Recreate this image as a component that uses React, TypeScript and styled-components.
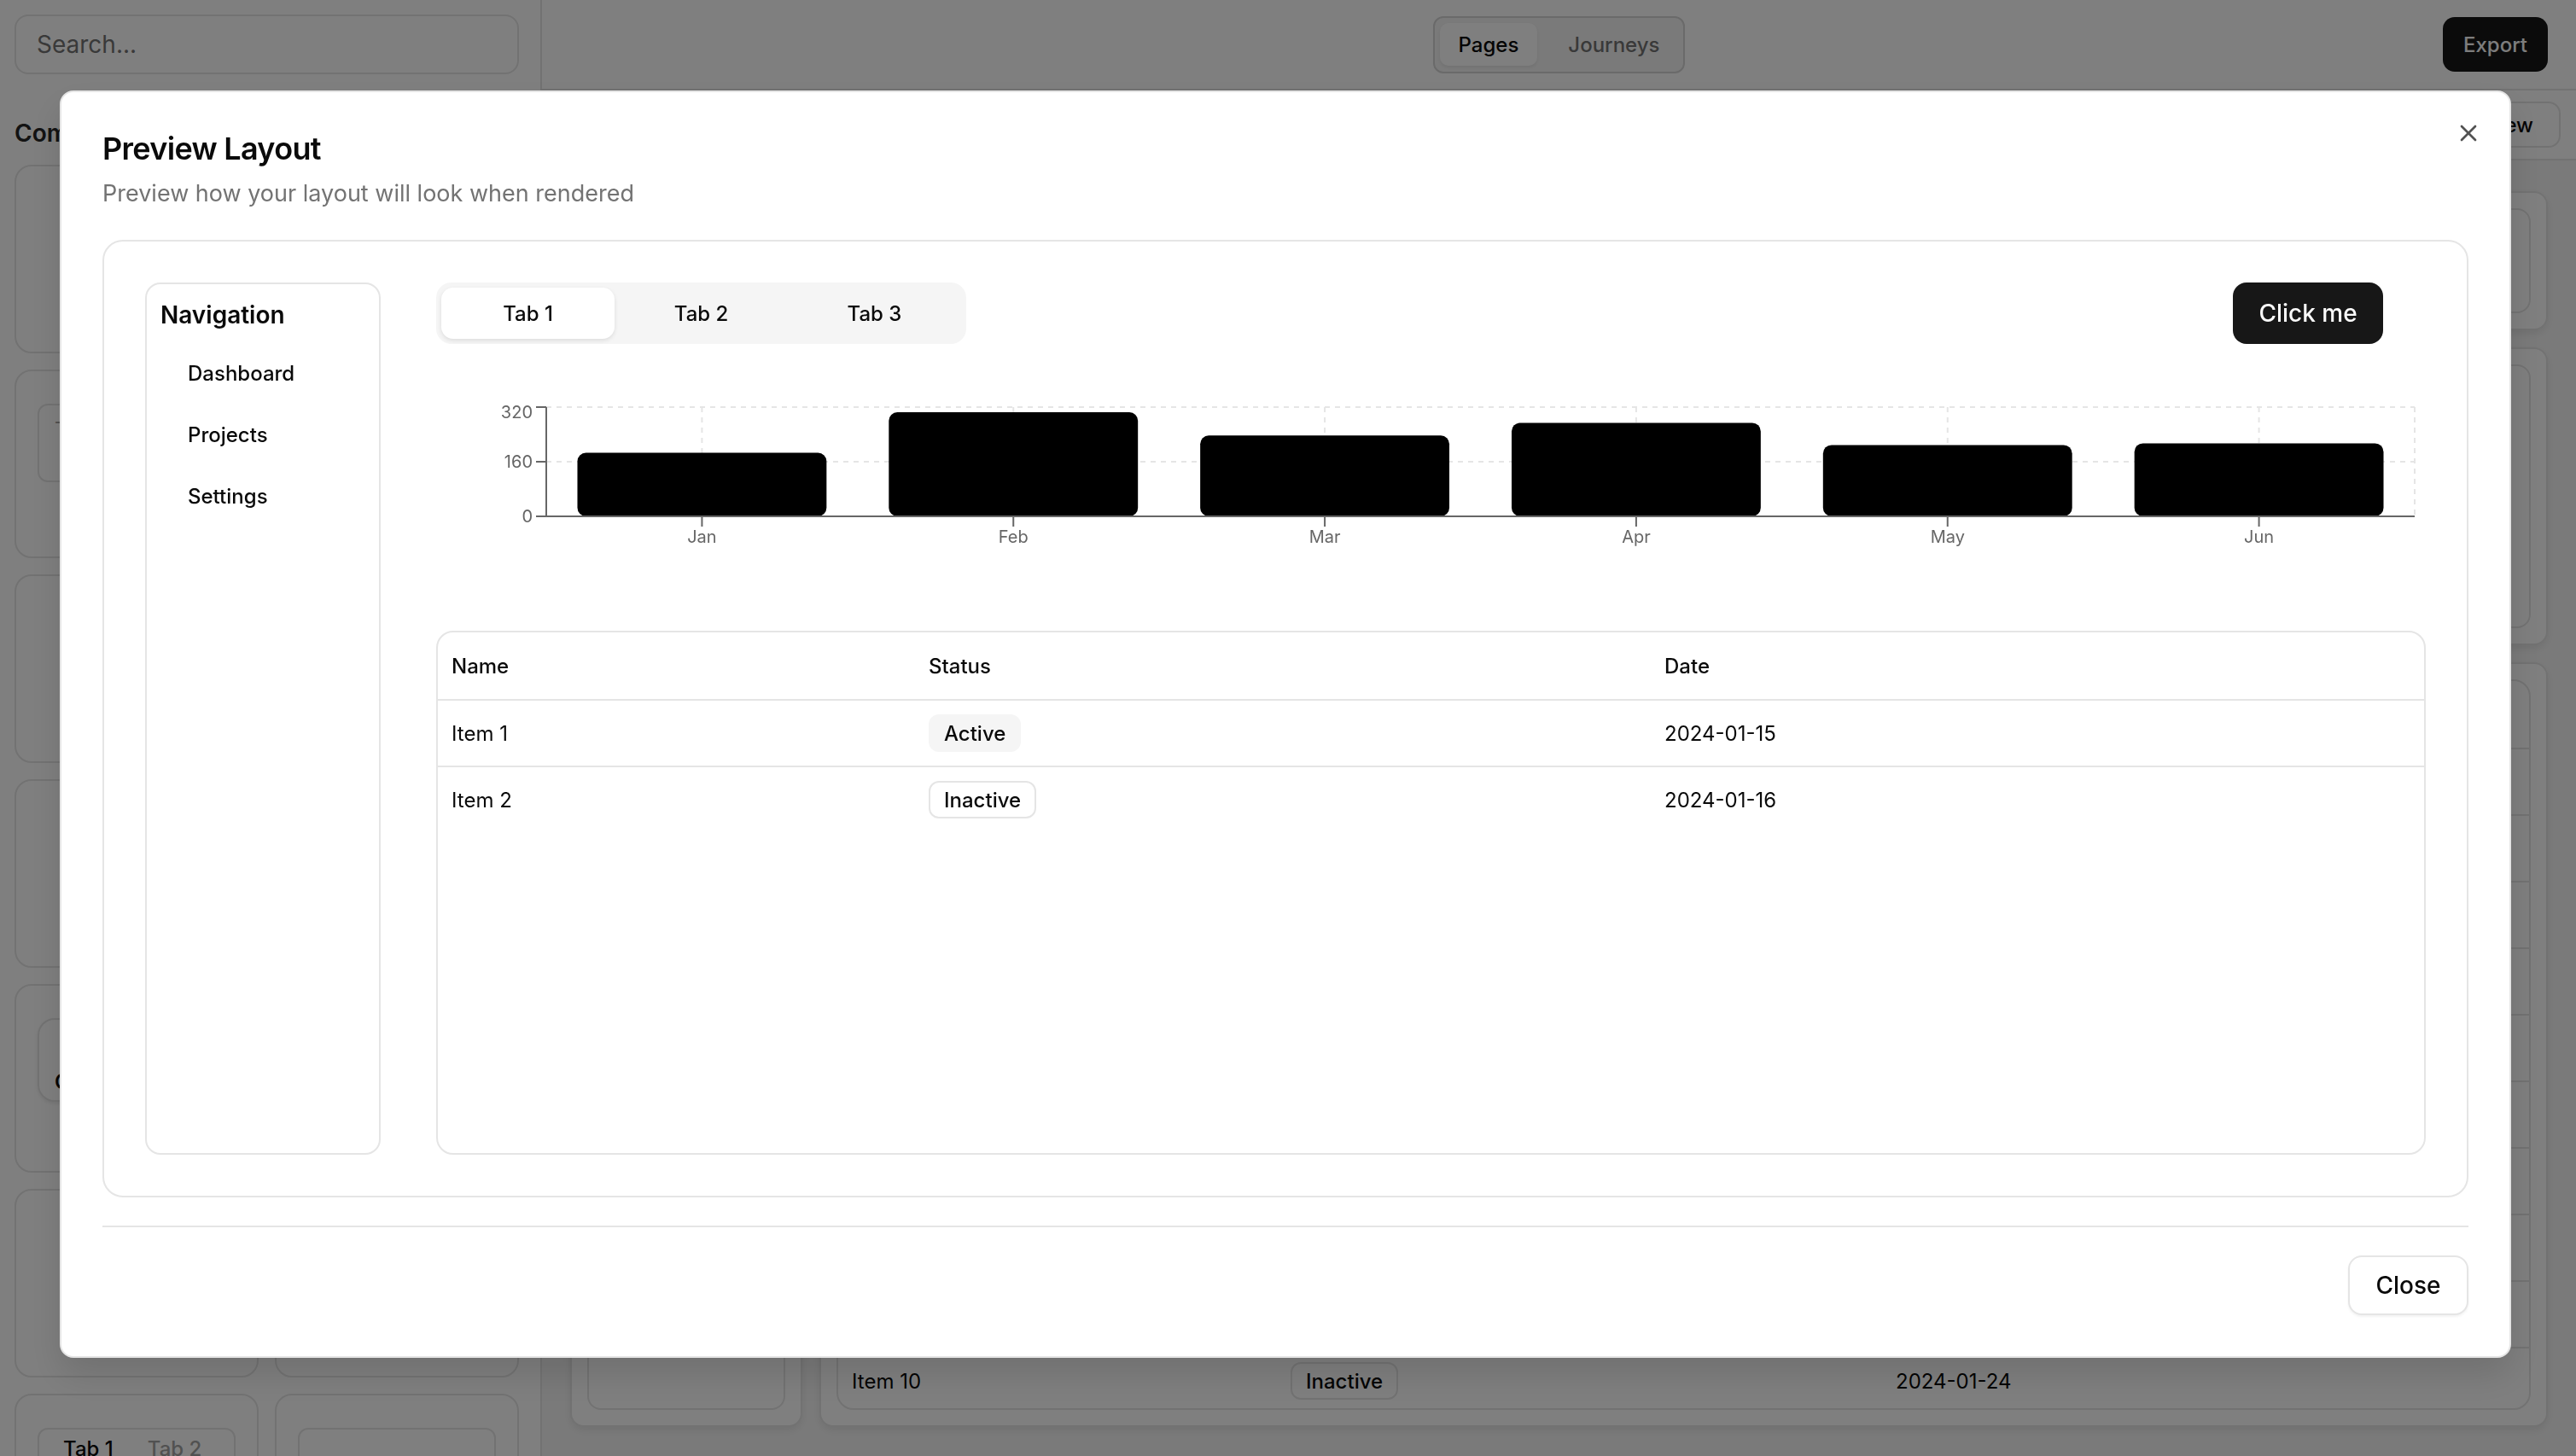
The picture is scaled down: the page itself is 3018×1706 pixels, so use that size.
import React from 'react'
import styled, { createGlobalStyle } from 'styled-components'
import { X } from 'lucide-react'

const GlobalStyle = createGlobalStyle`
  * { box-sizing: border-box; }
  html, body { margin: 0; padding: 0; }
  body {
    font-family: Inter, "Noto Sans", "Liberation Sans", sans-serif;
    color: #0a0a0a;
    background: #ffffff;
    overflow: hidden;
  }
`

type Row = { name: string; active: boolean; date: string }

const modalRows: Row[] = [
  { name: 'Item 1', active: true, date: '2024-01-15' },
  { name: 'Item 2', active: false, date: '2024-01-16' },
]

const bgRows: Row[] = Array.from({ length: 10 }, (_, i) => ({
  name: `Item ${i + 1}`,
  active: i % 2 === 0,
  date: `2024-01-${String(15 + i).padStart(2, '0')}`,
}))

const chartData = [
  { month: 'Jan', value: 186 },
  { month: 'Feb', value: 305 },
  { month: 'Mar', value: 237 },
  { month: 'Apr', value: 274 },
  { month: 'May', value: 209 },
  { month: 'Jun', value: 214 },
]

// ---------- page behind the dialog ----------

const Page = styled.div`
  width: 3018px;
  height: 1706px;
  display: flex;
  overflow: hidden;
  background: #ffffff;
`

const Sidebar = styled.aside`
  width: 635px;
  height: 1706px;
  flex-shrink: 0;
  border-right: 2px solid #e5e5e5;
  padding: 17px 25px 0 17px;
  overflow: hidden;
`

const SearchBox = styled.div`
  height: 70px;
  border: 2px solid #e5e5e5;
  border-radius: 16px;
  padding: 0 24px;
  display: flex;
  align-items: center;
  font-size: 28px;
  color: #737373;
`

const SectionTitle = styled.h3`
  margin: 49px 0 0;
  font-size: 28px;
  line-height: 40px;
  font-weight: 600;
  color: #262626;
`

const CardGrid = styled.div`
  margin-top: 17px;
  display: grid;
  grid-template-columns: 1fr 1fr;
  gap: 19px 19px;
`

const SideCard = styled.div`
  height: 221px;
  border: 2px solid #e5e5e5;
  border-radius: 20px;
  padding: 38px 25px;
`

const MiniInput = styled.div<{ $h: number; $top?: number }>`
  height: ${p => p.$h}px;
  border: 2px solid #e5e5e5;
  border-radius: 12px;
  padding: ${p => p.$top ?? 14}px 18px 0;
  font-size: 24px;
  color: #a3a3a3;
`

const MiniCard = styled.div`
  height: 98px;
  border: 2px solid #e5e5e5;
  border-radius: 20px;
  box-shadow: 0 2px 4px rgba(0, 0, 0, 0.08);
  padding: 58px 18px 0;
  font-size: 24px;
  font-weight: 600;
`

const MiniTabs = styled.div`
  display: flex;
  gap: 40px;
  padding: 8px 28px;
  border: 2px solid #e5e5e5;
  border-radius: 12px;
  font-size: 24px;
  font-weight: 500;
  span:last-child { color: #a3a3a3; }
`

const Main = styled.main`
  flex: 1;
  display: flex;
  flex-direction: column;
  min-width: 0;
`

const TopBar = styled.header`
  height: 106px;
  flex-shrink: 0;
  border-bottom: 2px solid #e5e5e5;
  display: grid;
  grid-template-columns: 1fr auto 1fr;
  align-items: center;
  padding: 0 33px;
`

const Toggle = styled.div`
  grid-column: 2;
  display: flex;
  align-items: center;
  height: 67px;
  padding: 0 6px;
  gap: 14px;
  border: 2px solid #d4d4d4;
  border-radius: 12px;
  background: #f5f5f5;
`

const ToggleItem = styled.div<{ $on?: boolean }>`
  height: 50px;
  padding: 0 22px;
  display: flex;
  align-items: center;
  border-radius: 10px;
  font-size: 24px;
  font-weight: 500;
  color: ${p => (p.$on ? '#0a0a0a' : '#737373')};
  background: ${p => (p.$on ? '#ffffff' : 'transparent')};
  box-shadow: ${p => (p.$on ? '0 2px 4px rgba(0,0,0,0.08)' : 'none')};
`

const ExportButton = styled.div`
  justify-self: end;
  height: 64px;
  padding: 0 24px;
  display: flex;
  align-items: center;
  border-radius: 14px;
  background: #171717;
  color: #fafafa;
  font-size: 24px;
  font-weight: 500;
`

const SubBar = styled.div`
  height: 82px;
  flex-shrink: 0;
  border-bottom: 2px solid #e5e5e5;
  display: flex;
  justify-content: flex-end;
  align-items: center;
  padding: 0 18px;
`

const GhostButton = styled.div`
  height: 54px;
  padding: 0 30px;
  display: flex;
  align-items: center;
  border: 2px solid #e5e5e5;
  border-radius: 14px;
  font-size: 24px;
  font-weight: 500;
`

const Canvas = styled.div`
  flex: 1;
  background: #f5f5f5;
  padding: 36px 33px 34px;
  display: grid;
  grid-template-columns: 272px 1fr;
  gap: 20px;
  min-height: 0;
`

const Frame = styled.div<{ $h?: number }>`
  ${p => (p.$h ? `height: ${p.$h}px; flex-shrink: 0;` : 'flex: 1;')}
  background: #ffffff;
  border: 2px solid #e5e5e5;
  border-radius: 16px;
  padding: 18px;
  box-shadow: 0 4px 10px rgba(0, 0, 0, 0.08);
  display: flex;
  flex-direction: column;
  min-height: 0;
  overflow: hidden;
`

const FrameColumn = styled.div`
  display: flex;
  flex-direction: column;
  gap: 20px;
  min-height: 0;
`

const InnerBox = styled.div`
  flex: 1;
  border: 2px solid #e5e5e5;
  border-radius: 16px;
`

// ---------- dialog ----------

const Overlay = styled.div`
  position: fixed;
  inset: 0;
  background: rgba(0, 0, 0, 0.5);
`

const Dialog = styled.div`
  position: fixed;
  left: 70px;
  top: 106px;
  width: 2872px;
  background: #ffffff;
  border: 2px solid #e5e5e5;
  border-radius: 16px;
  padding: 48px;
  display: flex;
  flex-direction: column;
  gap: 33px;
  box-shadow: 0 20px 40px rgba(0, 0, 0, 0.12);
`

const CloseIcon = styled.div`
  position: absolute;
  top: 32px;
  right: 32px;
  width: 32px;
  height: 32px;
  color: #0a0a0a;
  opacity: 0.7;
  display: flex;
`

const Header = styled.div`
  display: flex;
  flex-direction: column;
  gap: 15px;
  margin-bottom: 1px;
`

const Title = styled.h2`
  margin: 0;
  font-size: 36px;
  line-height: 36px;
  font-weight: 600;
  letter-spacing: -0.7px;
`

const Description = styled.p`
  margin: 0;
  font-size: 27px;
  line-height: 40px;
  color: #737373;
`

const PreviewCard = styled.div`
  height: 1122px;
  border: 2px solid #e5e5e5;
  border-radius: 24px;
  padding: 48px;
  display: grid;
  grid-template-columns: 276px 1fr;
  gap: 65px;
`

const NavPanel = styled.nav`
  border: 2px solid #e5e5e5;
  border-radius: 18px;
  padding: 16px;
`

const NavTitle = styled.div`
  font-size: 28px;
  line-height: 40px;
  font-weight: 600;
`

const NavList = styled.ul`
  list-style: none;
  margin: 12px 0 0;
  padding: 0;
`

const NavItem = styled.li`
  height: 72px;
  padding-left: 32px;
  display: flex;
  align-items: center;
  font-size: 24px;
  font-weight: 500;
`

const MainCol = styled.div`
  display: flex;
  flex-direction: column;
  min-width: 0;
`

const TopRow = styled.div`
  height: 72px;
  display: flex;
  justify-content: space-between;
  align-items: center;
`

const TabsList = styled.div`
  display: flex;
  padding: 6px;
  border-radius: 18px;
  background: #f5f5f5;
`

const Tab = styled.div<{ $active?: boolean }>`
  width: 203px;
  height: 60px;
  display: flex;
  align-items: center;
  justify-content: center;
  border-radius: 14px;
  font-size: 24px;
  font-weight: 500;
  color: #0a0a0a;
  background: ${p => (p.$active ? '#ffffff' : 'transparent')};
  box-shadow: ${p => (p.$active ? '0 2px 5px rgba(0,0,0,0.1)' : 'none')};
`

const PrimaryButton = styled.div`
  height: 72px;
  width: 176px;
  margin-right: 50px;
  display: flex;
  align-items: center;
  justify-content: center;
  border-radius: 16px;
  background: #171717;
  color: #fafafa;
  font-size: 28px;
  font-weight: 500;
`

const ChartWrap = styled.div`
  height: 336px;
  flex-shrink: 0;
`

const TableBox = styled.div<{ $fill?: boolean }>`
  ${p => (p.$fill ? 'flex: 1;' : '')}
  border: 2px solid #e5e5e5;
  border-radius: 20px;
  overflow: hidden;
  min-height: 0;
`

const TableRow = styled.div<{ $cols: string; $head?: boolean }>`
  display: grid;
  grid-template-columns: ${p => p.$cols};
  height: ${p => (p.$head ? 80 : 78)}px;
  align-items: center;
  border-bottom: 2px solid #e5e5e5;
  font-size: 24px;
  font-weight: ${p => (p.$head ? 500 : 400)};
  &:last-child { border-bottom: none; height: 76px; }
`

const Cell = styled.div`
  padding: 0 16px;
  white-space: nowrap;
`

const Badge = styled.span<{ $active: boolean }>`
  display: inline-flex;
  align-items: center;
  height: 44px;
  padding: 0 16px;
  border-radius: 12px;
  border: 2px solid ${p => (p.$active ? 'transparent' : '#e5e5e5')};
  background: ${p => (p.$active ? '#f5f5f5' : '#ffffff')};
  font-size: 24px;
  font-weight: 500;
`

const Separator = styled.div`
  height: 2px;
  background: #e5e5e5;
`

const Footer = styled.div`
  display: flex;
  justify-content: flex-end;
`

const OutlineButton = styled.div`
  height: 70px;
  width: 141px;
  display: flex;
  align-items: center;
  justify-content: center;
  border: 2px solid #e5e5e5;
  border-radius: 16px;
  background: #ffffff;
  box-shadow: 0 2px 3px rgba(0, 0, 0, 0.05);
  font-size: 28px;
  font-weight: 500;
`

const DataTable = ({ rows, cols, fill }: { rows: Row[]; cols: string; fill?: boolean }) => (
  <TableBox $fill={fill}>
    <TableRow $cols={cols} $head>
      <Cell>Name</Cell>
      <Cell>Status</Cell>
      <Cell>Date</Cell>
    </TableRow>
    {rows.map(r => (
      <TableRow key={r.name} $cols={cols}>
        <Cell>{r.name}</Cell>
        <Cell>
          <Badge $active={r.active}>{r.active ? 'Active' : 'Inactive'}</Badge>
        </Cell>
        <Cell>{r.date}</Cell>
      </TableRow>
    ))}
  </TableBox>
)

const BarChart = () => {
  const W = 2330
  const H = 336
  const x0 = 129
  const x1 = 2318
  const top = 74
  const base = 202
  const band = (x1 - x0) / chartData.length
  const barW = band * 0.8
  const y = (v: number) => base - (v / 320) * (base - top)
  return (
    <svg width={W} height={H} viewBox={`0 0 ${W} ${H}`}>
      <g stroke="#e5e5e5" strokeWidth={2} strokeDasharray="6 6">
        <line x1={x0} x2={x1} y1={top} y2={top} />
        <line x1={x0} x2={x1} y1={y(160)} y2={y(160)} />
        {chartData.map((d, i) => (
          <line key={d.month} x1={x0 + band * (i + 0.5)} x2={x0 + band * (i + 0.5)} y1={top} y2={base} />
        ))}
        <line x1={x1} x2={x1} y1={top} y2={base} />
      </g>
      {chartData.map((d, i) => (
        <rect
          key={d.month}
          x={x0 + band * i + (band - barW) / 2}
          y={y(d.value)}
          width={barW}
          height={base - y(d.value)}
          rx={10}
          fill="#000000"
        />
      ))}
      <g stroke="#666666" strokeWidth={2}>
        <line x1={x0} x2={x0} y1={top} y2={base} />
        <line x1={x0} x2={x1} y1={base} y2={base} />
        {[320, 160, 0].map(v => (
          <line key={v} x1={x0 - 12} x2={x0} y1={y(v)} y2={y(v)} />
        ))}
        {chartData.map((d, i) => (
          <line key={d.month} x1={x0 + band * (i + 0.5)} x2={x0 + band * (i + 0.5)} y1={base} y2={base + 12} />
        ))}
      </g>
      <g fill="#666666" fontSize={20} fontFamily="Inter, sans-serif">
        {[320, 160, 0].map(v => (
          <text key={v} x={x0 - 16} y={y(v) + (v === 320 ? 6 : 0)} textAnchor="end" dominantBaseline="central">
            {v}
          </text>
        ))}
        {chartData.map((d, i) => (
          <text key={d.month} x={x0 + band * (i + 0.5)} y={226} textAnchor="middle" dominantBaseline="central">
            {d.month}
          </text>
        ))}
      </g>
    </svg>
  )
}

const App = () => (
  <>
    <GlobalStyle />
    <Page>
      <Sidebar>
        <SearchBox>Search...</SearchBox>
        <SectionTitle>Components</SectionTitle>
        <CardGrid>
          <SideCard />
          <SideCard />
          <SideCard>
            <MiniInput $h={92}>Type here...</MiniInput>
          </SideCard>
          <SideCard />
          <SideCard />
          <SideCard />
          <SideCard />
          <SideCard />
          <SideCard>
            <MiniCard>Card</MiniCard>
          </SideCard>
          <SideCard />
          <SideCard />
          <SideCard />
          <SideCard>
            <MiniTabs>
              <span>Tab 1</span>
              <span>Tab 2</span>
            </MiniTabs>
          </SideCard>
          <SideCard>
            <MiniInput $h={60} $top={20} />
          </SideCard>
        </CardGrid>
      </Sidebar>
      <Main>
        <TopBar>
          <Toggle>
            <ToggleItem $on>Pages</ToggleItem>
            <ToggleItem>Journeys</ToggleItem>
          </Toggle>
          <ExportButton>Export</ExportButton>
        </TopBar>
        <SubBar>
          <GhostButton>Preview</GhostButton>
        </SubBar>
        <Canvas>
          <FrameColumn>
            <Frame>
              <InnerBox />
            </Frame>
          </FrameColumn>
          <FrameColumn>
            <Frame $h={163}>
              <InnerBox />
            </Frame>
            <Frame $h={349}>
              <InnerBox />
            </Frame>
            <Frame>
              <DataTable rows={bgRows} cols="514px 709px 1fr" fill />
            </Frame>
          </FrameColumn>
        </Canvas>
      </Main>
    </Page>

    <Overlay />
    <Dialog>
      <CloseIcon>
        <X size={32} strokeWidth={2} />
      </CloseIcon>
      <Header>
        <Title>Preview Layout</Title>
        <Description>Preview how your layout will look when rendered</Description>
      </Header>
      <PreviewCard>
        <NavPanel>
          <NavTitle>Navigation</NavTitle>
          <NavList>
            {['Dashboard', 'Projects', 'Settings'].map(n => (
              <NavItem key={n}>{n}</NavItem>
            ))}
          </NavList>
        </NavPanel>
        <MainCol>
          <TopRow>
            <TabsList>
              <Tab $active>Tab 1</Tab>
              <Tab>Tab 2</Tab>
              <Tab>Tab 3</Tab>
            </TabsList>
            <PrimaryButton>Click me</PrimaryButton>
          </TopRow>
          <ChartWrap>
            <BarChart />
          </ChartWrap>
          <DataTable rows={modalRows} cols="559px 862px 1fr" fill />
        </MainCol>
      </PreviewCard>
      <Separator />
      <Footer>
        <OutlineButton>Close</OutlineButton>
      </Footer>
    </Dialog>
  </>
)

export default App
